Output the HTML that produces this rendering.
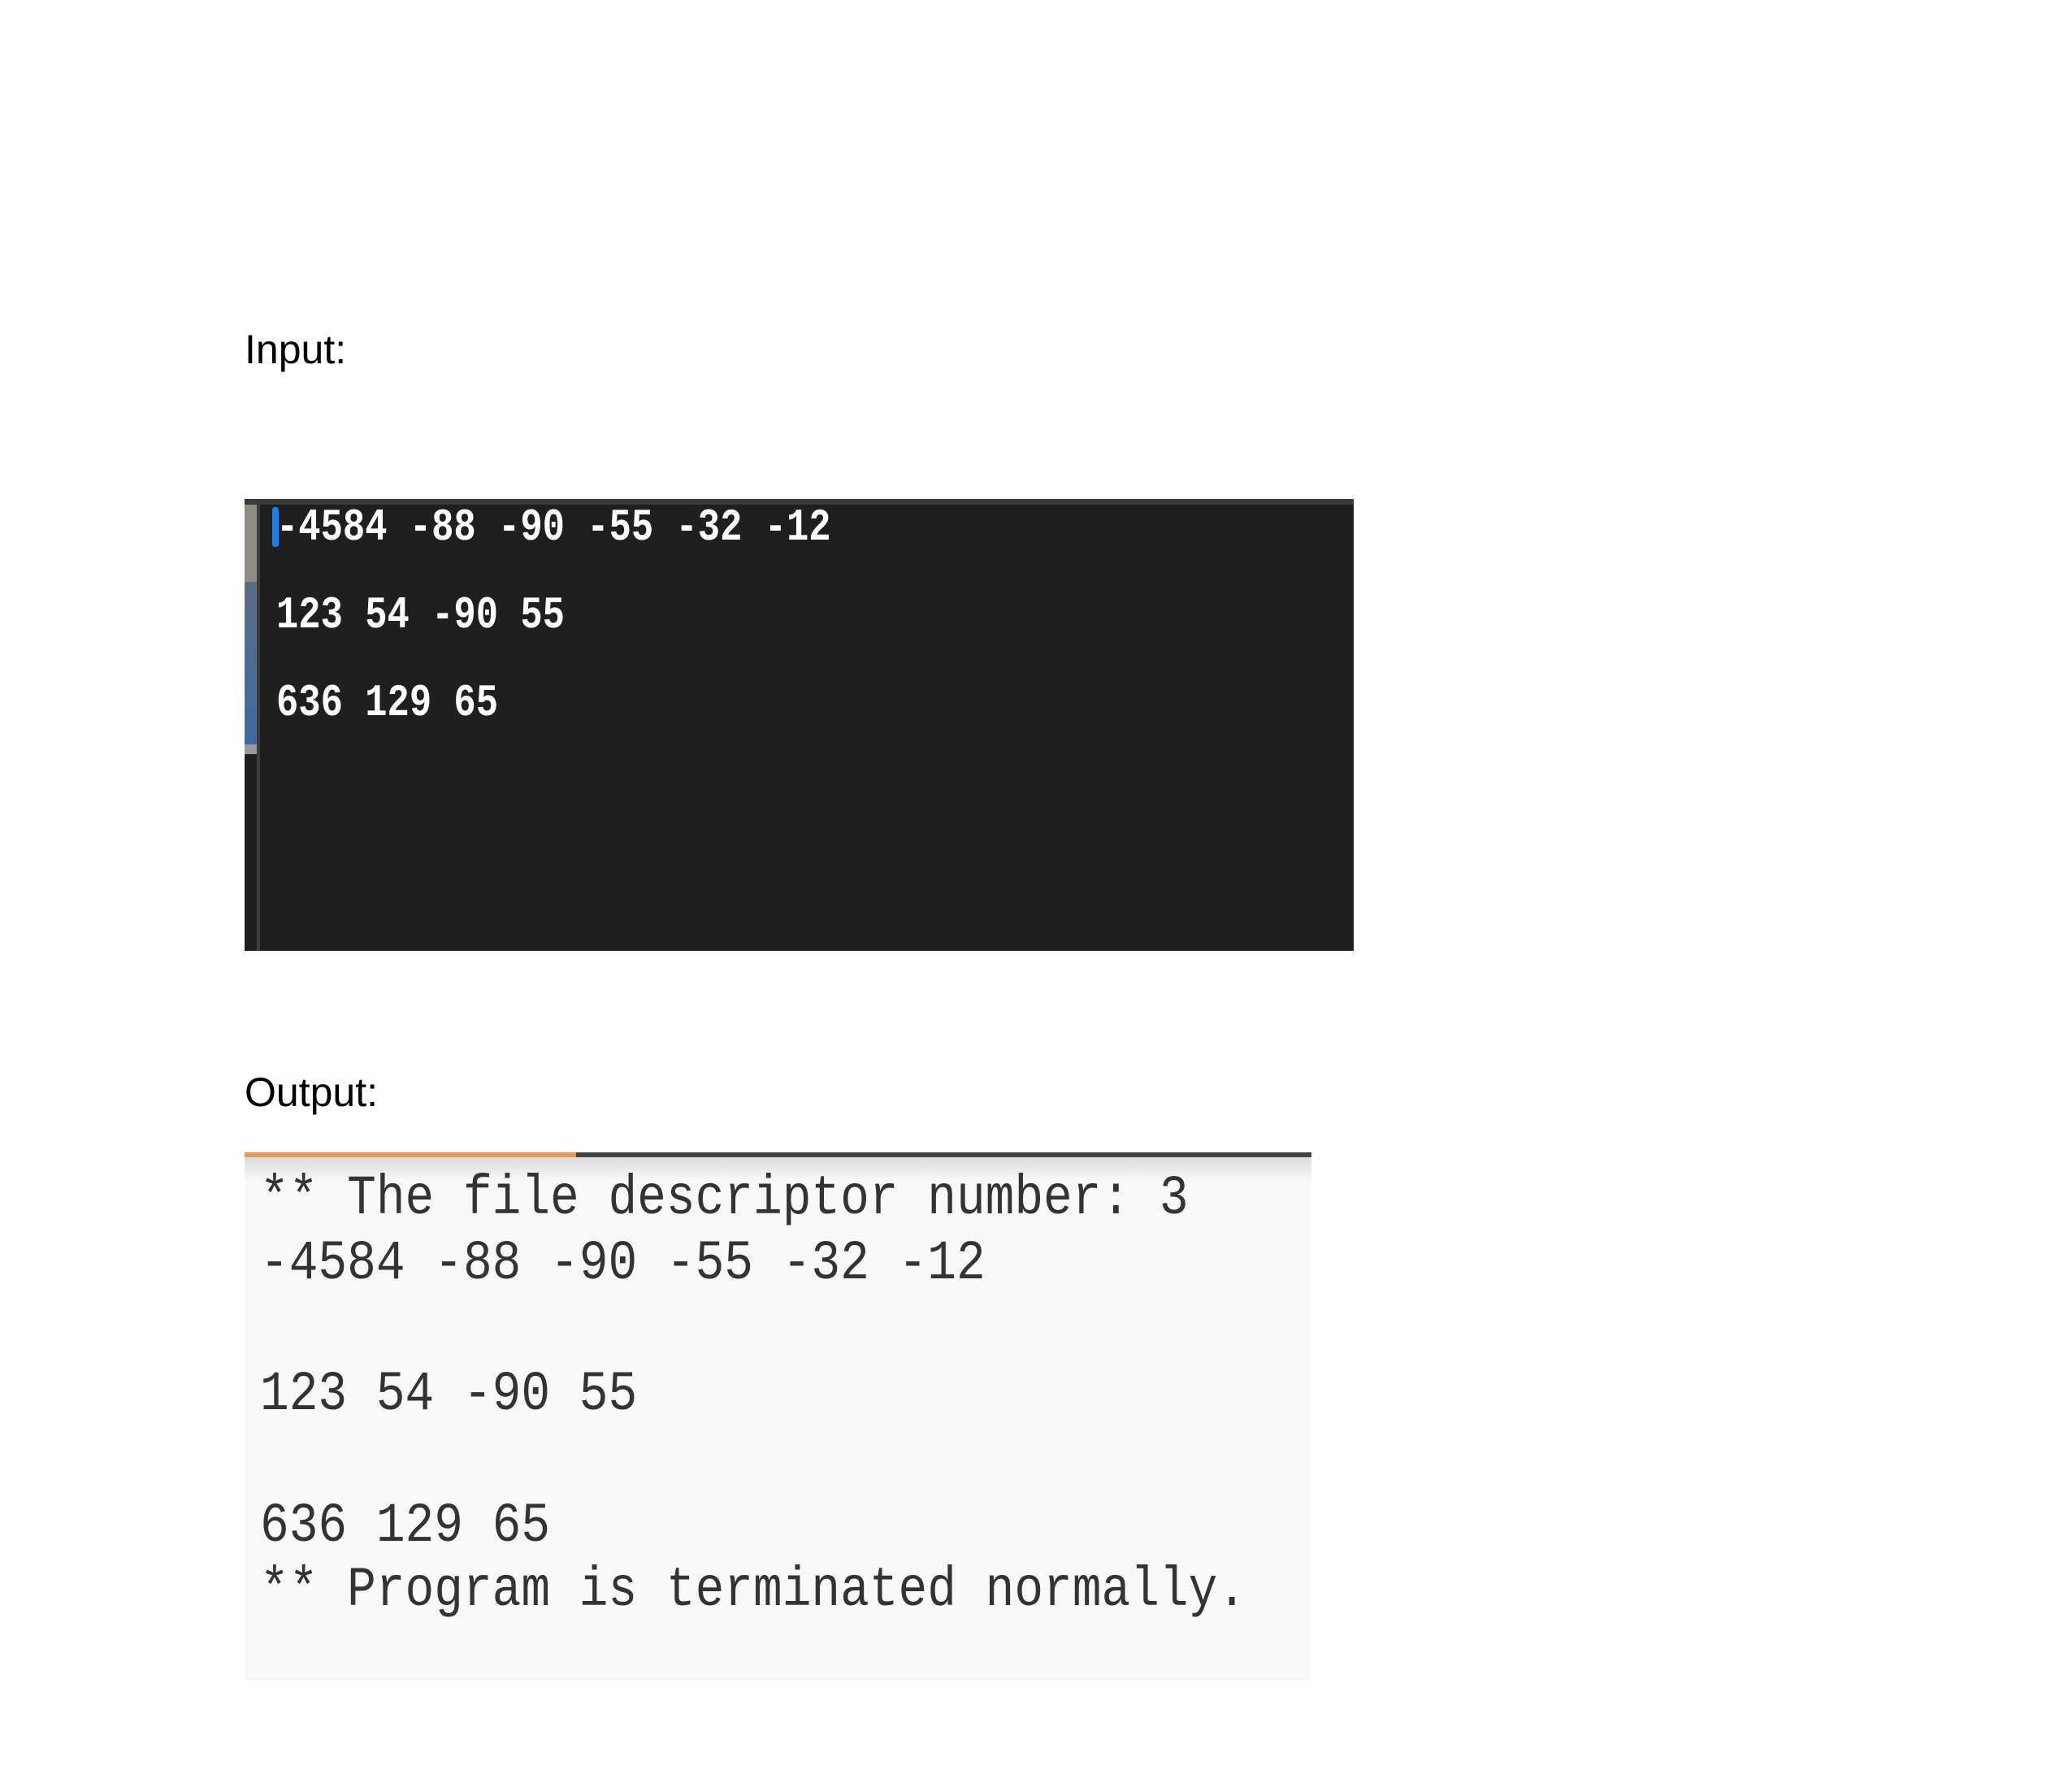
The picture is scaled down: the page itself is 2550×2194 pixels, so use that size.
<!DOCTYPE html>
<html><head><meta charset="utf-8"><style>
html,body{margin:0;padding:0;background:#fff;width:2550px;height:2194px;overflow:hidden;position:relative}
.lbl{position:absolute;font-family:"Liberation Sans",sans-serif;font-size:50px;color:#000;line-height:50px}
.t{position:absolute;white-space:pre;font-family:"Liberation Mono",monospace;transform-origin:0 100%}
.w{font-size:45.5px;line-height:44px;color:#fff;font-weight:bold;transform:scaleY(1.22)}
.o{font-size:59.5px;line-height:60px;color:#333;transform:scaleY(1.15)}
</style></head><body>
<div class="lbl" style="left:301px;top:405px">Input:</div>
<div style="position:absolute;left:301px;top:614px;width:1365px;height:556px;background:#1f1f1f;border-top:7px solid #3a3a3a;box-sizing:border-box"></div>
<div style="position:absolute;left:301px;top:621px;width:15px;height:95px;background:#8f8c86"></div>
<div style="position:absolute;left:301px;top:716px;width:15px;height:200px;background:linear-gradient(#5a6d85,#3d6aa6)"></div>
<div style="position:absolute;left:301px;top:916px;width:15px;height:12px;background:#999"></div>
<div style="position:absolute;left:316px;top:621px;width:4px;height:549px;background:#3c3c3c"></div>
<div style="position:absolute;left:335px;top:624px;width:8px;height:49px;background:#1a7ff0;border-radius:3px"></div>
<div class="t w" style="left:340px;top:632px">-4584 -88 -90 -55 -32 -12</div>
<div class="t w" style="left:340px;top:740px">123 54 -90 55</div>
<div class="t w" style="left:340px;top:848px">636 129 65</div>

<div class="lbl" style="left:301px;top:1319px">Output:</div>
<div style="position:absolute;left:301px;top:1418px;width:1313px;height:650px;background:#f8f8f8"></div>
<div style="position:absolute;left:301px;top:1418px;width:1313px;height:6px;background:#444"></div>
<div style="position:absolute;left:301px;top:1418px;width:408px;height:6px;background:#e39a55"></div>
<div style="position:absolute;left:301px;top:1424px;width:1313px;height:30px;background:linear-gradient(#ddd,#f8f8f8)"></div>
<div class="t o" style="left:320px;top:1449px">** The file descriptor number: 3</div>
<div class="t o" style="left:320px;top:1529px">-4584 -88 -90 -55 -32 -12</div>
<div class="t o" style="left:320px;top:1690px">123 54 -90 55</div>
<div class="t o" style="left:320px;top:1852px">636 129 65</div>
<div class="t o" style="left:320px;top:1931px">** Program is terminated normally.</div>
</body></html>
